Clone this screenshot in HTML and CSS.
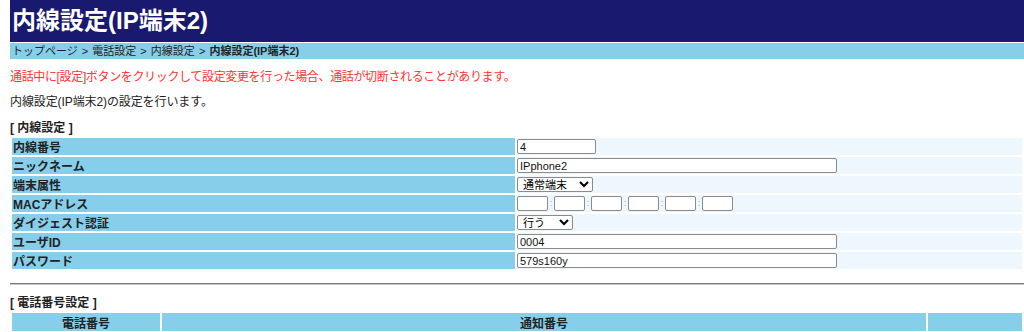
FILE: index.html
```html
<!DOCTYPE html>
<html>
<head>
    <meta charset="utf-8">
    <title>内線設定(IP端末2)</title>
    <link rel="stylesheet" href="styles.css">
</head>
<body>
    <h1 class="page-title">内線設定(IP端末2)</h1>
    <div class="breadcrumb">
        トップページ &gt; 電話設定 &gt; 内線設定 &gt; <b>内線設定(IP端末2)</b>
    </div>

    <p class="notice">通話中に[設定]ボタンをクリックして設定変更を行った場合、通話が切断されることがあります。</p>
    <p class="intro">内線設定(IP端末2)の設定を行います。</p>

    <div class="section-title">[ 内線設定 ]</div>
    <table class="form-table">
        <tr>
            <td class="label">内線番号</td>
            <td class="value"><input class="txt short" value="4"></td>
        </tr>
        <tr>
            <td class="label">ニックネーム</td>
            <td class="value"><input class="txt long" value="IPphone2"></td>
        </tr>
        <tr>
            <td class="label">端末属性</td>
            <td class="value">
                <select class="sel type">
                    <option>通常端末</option>
                </select>
            </td>
        </tr>
        <tr>
            <td class="label">MACアドレス</td>
            <td class="value">
                <div class="mac">
                    <input class="txt mac-box"><span class="sep">:</span>
                    <input class="txt mac-box"><span class="sep">:</span>
                    <input class="txt mac-box"><span class="sep">:</span>
                    <input class="txt mac-box"><span class="sep">:</span>
                    <input class="txt mac-box"><span class="sep">:</span>
                    <input class="txt mac-box">
                </div>
            </td>
        </tr>
        <tr>
            <td class="label">ダイジェスト認証</td>
            <td class="value">
                <select class="sel digest">
                    <option>行う</option>
                </select>
            </td>
        </tr>
        <tr>
            <td class="label">ユーザID</td>
            <td class="value"><input class="txt long" value="0004"></td>
        </tr>
        <tr>
            <td class="label">パスワード</td>
            <td class="value"><input class="txt long" value="579s160y"></td>
        </tr>
    </table>

    <hr class="divider">

    <div class="section-title">[ 電話番号設定 ]</div>
    <table class="number-table">
        <tr>
            <th class="col-number">電話番号</th>
            <th class="col-notify">通知番号</th>
            <th class="col-extra"></th>
        </tr>
    </table>
</body>
</html>
```

FILE: styles.css
```css
body {
    font-family: "Liberation Sans", "Noto Sans CJK JP", sans-serif;
    font-size: 12px;
    color: #222;
    margin: 0 0 0 10px;
    padding: 0;
    background-color: #ffffff;
}

.page-title {
    margin: 0;
    height: 42px;
    line-height: 42px;
    padding-left: 2px;
    font-size: 24px;
    font-weight: bold;
    color: #ffffff;
    background-color: #191970;
}

.breadcrumb {
    margin-top: 1px;
    height: 16px;
    line-height: 16px;
    padding-left: 2px;
    font-size: 11px;
    word-spacing: 1px;
    background-color: #87ceeb;
}

.notice {
    margin: 10px 0 0;
    line-height: 16px;
    letter-spacing: -0.35px;
    color: #ff3333;
}

.intro {
    margin: 9px 0 0;
    line-height: 16px;
    letter-spacing: -0.1px;
}

.section-title {
    margin-top: 10px;
    line-height: 16px;
    font-weight: bold;
}

.form-table, .number-table {
    width: 100%;
    border-spacing: 2px;
    border-collapse: separate;
}

.form-table td {
    height: 17px;
    padding: 0 1px;
}

.form-table .label {
    width: 501px;
    font-weight: bold;
    background-color: #87ceeb;
}

.form-table .value {
    padding-left: 0;
    background-color: #eef6fe;
}

.txt {
    display: block;
    box-sizing: border-box;
    height: 15px;
    margin: 0;
    padding: 0 2px;
    font-family: "Liberation Sans", "Noto Sans CJK JP", sans-serif;
    font-size: 11px;
    color: #111;
    border: 1px solid #8a8a8a;
    border-radius: 2px;
    background-color: #ffffff;
}

.short {
    width: 79px;
}

.long {
    width: 320px;
}

.sel {
    display: block;
    box-sizing: border-box;
    height: 15px;
    margin: 0;
    padding: 0 0 0 1px;
    font-family: "Liberation Sans", "Noto Sans CJK JP", sans-serif;
    font-size: 11px;
    border: 1px solid #8a8a8a;
    border-radius: 2px;
    background-color: #ffffff;
}

.type {
    width: 76px;
}

.digest {
    width: 56px;
}

.mac {
    display: flex;
    align-items: center;
}

.mac-box {
    width: 31px;
}

.sep {
    width: 6px;
    text-align: center;
    font-size: 9px;
    line-height: 15px;
    color: #9aa8b8;
}

.divider {
    margin: 12px 0 10px;
    border: 0;
    border-top: 1px solid #7a7a7a;
    border-bottom: 1px solid #c8c8c8;
}

.number-table th {
    height: 18px;
    padding: 0;
    font-size: 12px;
    background-color: #87ceeb;
}

.col-number {
    width: 148px;
}

.col-notify {
    width: 764px;
}
```
